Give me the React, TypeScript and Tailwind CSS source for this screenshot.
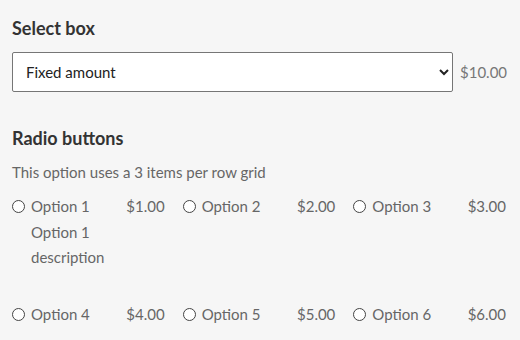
import { useState } from "react";

const options = [
    { id: 1, label: "Option 1", price: "$1.00", description: "Option 1 description" },
    { id: 2, label: "Option 2", price: "$2.00" },
    { id: 3, label: "Option 3", price: "$3.00" },
    { id: 4, label: "Option 4", price: "$4.00" },
    { id: 5, label: "Option 5", price: "$5.00" },
    { id: 6, label: "Option 6", price: "$6.00" },
];

export default function App() {
    const [amount, setAmount] = useState("fixed")
    const [picked, setPicked] = useState<number | null>(null)
    return (
        <div className="w-[520px] h-[340px] overflow-hidden bg-[#f6f6f6] px-3 pt-[17px] text-[15px] font-['Lato','Liberation_Sans',sans-serif] text-[#666]">
            <h2 className="text-[18px] font-bold text-[#333] leading-[22px]">Select box</h2>
            <div className="flex items-center mt-[13px]">
                <select
                    value={amount}
                    onChange={(e) => setAmount(e.target.value)}
                    className="w-[441px] h-10 bg-white border border-[#767676] rounded-[2px] pl-[9px] font-['Lato','Liberation_Sans',sans-serif] text-[15px] text-[#222]"
                >
                    <option value="fixed">Fixed amount</option>
                    <option value="custom">Custom amount</option>
                </select>
                <span className="ml-[7px] text-[#777]">$10.00</span>
            </div>
            <h2 className="text-[18px] font-bold text-[#333] leading-[22px] mt-[35px]">Radio buttons</h2>
            <p className="mt-[12px] leading-[22px]">This option uses a 3 items per row grid</p>
            <div className="grid grid-cols-3 gap-x-4 mt-[11px]">
                {options.map((o) => (
                    <label key={o.id} className="flex items-start h-[108px] cursor-pointer">
                        <input
                            type="radio"
                            name="opt"
                            checked={picked === o.id}
                            onChange={() => setPicked(o.id)}
                            className="appearance-none w-[13px] h-[13px] mt-[6px] rounded-full border border-[#444] bg-white shrink-0 checked:border-[4px]"
                        />
                        <div className="ml-[6px] flex-1 leading-[25px] pr-[2px]">
                            <div className="flex justify-between">
                                <span>{o.label}</span>
                                <span>{o.price}</span>
                            </div>
                            {o.description && <div className="w-[80px] pt-px">{o.description}</div>}
                        </div>
                    </label>
                ))}
            </div>
        </div>
    );
}
